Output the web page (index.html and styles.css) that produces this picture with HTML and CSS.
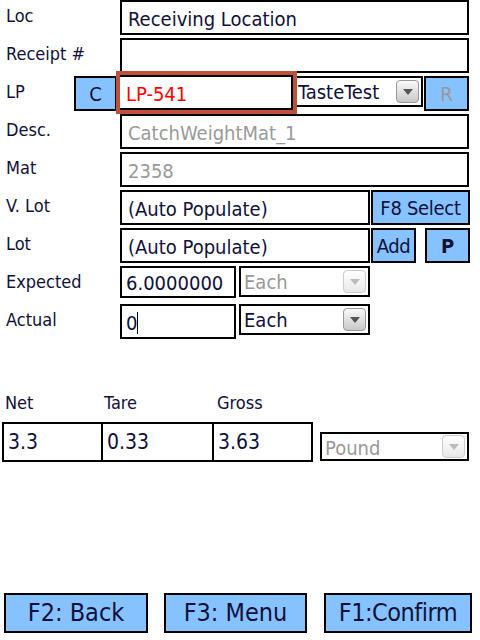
FILE: index.html
```html
<!DOCTYPE html>
<html lang="en">
<head>
  <meta charset="UTF-8" />
  <title>Receiving</title>
  <link rel="stylesheet" href="styles.css">
</head>
<body>
  <div class="form">
    <div class="row">
      <div class="lbl">Loc</div>
      <div class="fld w349">Receiving Location</div>
    </div>
    <div class="row">
      <div class="lbl">Receipt #</div>
      <div class="fld w349"></div>
    </div>
    <div class="row">
      <div class="lbl short">LP</div>
      <div class="btn btn-c">C</div>
      <div class="focus">
        <div class="fld lp">LP-541</div>
      </div>
      <div class="combo combo-lp">TasteTest<span class="arrow"><svg width="12" height="8" viewBox="0 0 12 8"><path d="M1 1h10L6 7z" fill="#555"/></svg></span></div>
      <div class="btn btn-r off">R</div>
    </div>
    <div class="row">
      <div class="lbl">Desc.</div>
      <div class="fld w349 grey">CatchWeightMat_1</div>
    </div>
    <div class="row">
      <div class="lbl">Mat</div>
      <div class="fld w349 grey">2358</div>
    </div>
    <div class="row">
      <div class="lbl">V. Lot</div>
      <div class="fld w250">(Auto Populate)</div>
      <div class="btn btn-f8">F8 Select</div>
    </div>
    <div class="row">
      <div class="lbl">Lot</div>
      <div class="fld w250">(Auto Populate)</div>
      <div class="btn btn-add">Add</div>
      <div class="btn btn-p">P</div>
    </div>
    <div class="row">
      <div class="lbl">Expected</div>
      <div class="fld qty qty-exp">6.0000000</div>
      <div class="combo combo-uom off">Each<span class="arrow"><svg width="12" height="8" viewBox="0 0 12 8"><path d="M1 1h10L6 7z" fill="#bbb"/></svg></span></div>
    </div>
    <div class="row">
      <div class="lbl">Actual</div>
      <div class="fld qty">0<span class="caret"></span></div>
      <div class="combo combo-uom">Each<span class="arrow"><svg width="12" height="8" viewBox="0 0 12 8"><path d="M1 1h10L6 7z" fill="#555"/></svg></span></div>
    </div>
  </div>

  <div class="weights">
    <div class="wlabels">
      <span class="wl-net">Net</span>
      <span class="wl-tare">Tare</span>
      <span>Gross</span>
    </div>
    <div class="wrow">
      <div class="wbox w-net">3.3</div>
      <div class="wbox w-tare">0.33</div>
      <div class="wbox w-gross">3.63</div>
      <div class="combo combo-pound off">Pound<span class="arrow"><svg width="12" height="8" viewBox="0 0 12 8"><path d="M1 1h10L6 7z" fill="#bbb"/></svg></span></div>
    </div>
  </div>

  <div class="footer">
    <div class="btn fbtn f2">F2: Back</div>
    <div class="btn fbtn f3">F3: Menu</div>
    <div class="btn fbtn f1">F1:Confirm</div>
  </div>
</body>
</html>
```

FILE: styles.css
```css
* { box-sizing: border-box; }
body { margin: 0; width: 480px; height: 640px; background: #fff; color: #10103a; font-family: "DejaVu Sans Condensed", "DejaVu Sans", sans-serif; display: flex; flex-direction: column; }

.row { display: flex; height: 35px; margin-bottom: 3px; }
.lbl { width: 120px; flex: none; padding: 5px 0 0 6px; font-size: 18px; white-space: nowrap; }
.lbl.short { width: 74px; }

.fld { flex: none; height: 35px; border: 2px solid #000; background: #fff; padding: 5px 0 0 6px; font-size: 20px; white-space: nowrap; overflow: hidden; }
.w349 { width: 349px; }
.w250 { width: 250px; }
.grey { color: #999; }

.btn { flex: none; height: 35px; border: 2px solid #000; background: #86c2ff; text-align: center; font-size: 20px; padding-top: 4px; white-space: nowrap; }
.btn.off { color: #999; }
.btn-c { width: 43px; }
.btn-r { width: 45px; margin-left: 1px; }
.btn-f8 { width: 99px; margin-left: 1px; letter-spacing: -0.3px; }
.btn-add { width: 45px; margin-left: 1px; letter-spacing: -0.5px; }
.btn-p { width: 45px; margin-left: 9px; font-weight: bold; }

.focus { flex: none; width: 181px; height: 43px; margin: -5px 0 0 -1px; border: 4px solid #c0503a; }
.fld.lp { width: 173px; color: #f00; border-width: 2px 2px 2px 0; padding-left: 6px; }

.combo { flex: none; position: relative; height: 31px; border: 2px solid #000; background: #fff; font-size: 20px; padding: 2px 0 0 3px; white-space: nowrap; }
.combo.off { color: #999; }
.combo-lp { width: 126px; border-left: 0; padding-left: 1px; }
.combo-uom { width: 131px; margin-left: 3px; }
.arrow { position: absolute; right: 2px; top: 2px; width: 23px; height: 23px; border: 1px solid #999; border-radius: 4px; background: linear-gradient(#fafafa, #c8c8c8); display: flex; align-items: center; justify-content: center; }
.combo.off .arrow { border-color: #ccc; background: linear-gradient(#fff, #e8e8e8); }

.qty { width: 116px; padding-left: 4px; }
.qty-exp { height: 32px; padding-top: 3px; }
.caret { display: inline-block; width: 1px; height: 22px; background: #000; vertical-align: -4px; }

.weights { margin-top: 50px; }
.wlabels { display: flex; font-size: 18px; padding-left: 5px; height: 30px; }
.wl-net { width: 99px; }
.wl-tare { width: 113px; }
.wrow { display: flex; align-items: flex-start; padding-left: 2px; }
.wbox { flex: none; height: 40px; border: 2px solid #000; font-size: 21px; padding: 6px 0 0 4px; }
.w-net { width: 101px; }
.w-tare { width: 113px; margin-left: -2px; }
.w-gross { width: 101px; margin-left: -2px; }
.combo-pound { width: 149px; height: 29px; margin: 10px 0 0 7px; }
.combo-pound .arrow { top: 1px; }

.footer { margin-top: auto; display: flex; padding: 0 0 7px 4px; }
.fbtn { height: 40px; font-size: 25px; padding-top: 3px; }
.f2 { width: 144px; }
.f3 { width: 143px; margin-left: 16px; }
.f1 { width: 148px; margin-left: 17px; letter-spacing: -0.5px; }
```
